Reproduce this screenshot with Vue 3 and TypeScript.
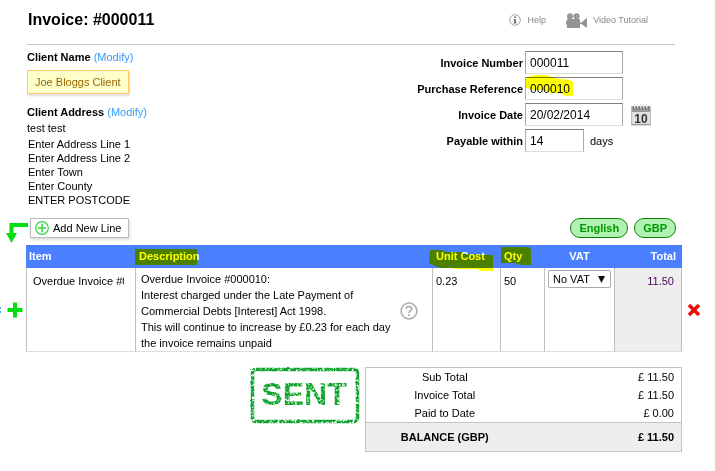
<script setup lang="ts">
import { computed, reactive, ref } from 'vue'

interface Line {
  item: string
  description: string
  unitCost: string
  qty: string
  vat: string
}

const invoiceNumber = ref('000011')
const purchaseReference = ref('000010')
const invoiceDate = ref('20/02/2014')
const payableWithin = ref('14')

const address = [
  'Enter Address Line 1',
  'Enter Address Line 2',
  'Enter Town',
  'Enter County',
  'ENTER POSTCODE',
]

const line = reactive<Line>({
  item: 'Overdue Invoice #000010',
  description: [
    'Overdue Invoice #000010:',
    'Interest charged under the Late Payment of',
    'Commercial Debts [Interest] Act 1998.',
    'This will continue to increase by £0.23 for each day',
    'the invoice remains unpaid',
  ].join('\n'),
  unitCost: '0.23',
  qty: '50',
  vat: 'No VAT',
})

const lineTotal = computed(() => (Number(line.unitCost) * Number(line.qty)).toFixed(2))
</script>

<template>
  <main class="page">
    <header class="header">
      <h1>Invoice: #{{ invoiceNumber }}</h1>
      <nav class="links">
        <a href="#help" class="help">
          <svg width="12" height="12" viewBox="0 0 12 12" aria-hidden="true">
            <circle cx="6" cy="6" r="5.3" fill="#fff" stroke="#a0a0a0" />
            <path d="M5 2.5h2v1.6H5zM4.6 5H7v3.6h.6v.9H4.4v-.9H5V5.9h-.4z" fill="#777" />
          </svg>
          Help
        </a>
        <a href="#video" class="video">
          <svg width="21" height="15" viewBox="0 0 21 15" aria-hidden="true">
            <g fill="#949494">
              <circle cx="4" cy="3.200" r="3" />
              <circle cx="10.500" cy="3.200" r="3" />
              <path d="M1 6h13v3.500h1.500L20 5.500h1v9h-1L15.500 11H14v4H1v-3.500H0V8h1z" />
            </g>
            <circle cx="4" cy="3" r=".6" fill="#ccc" />
            <circle cx="10.500" cy="3" r=".6" fill="#ccc" />
          </svg>
          Video Tutorial
        </a>
      </nav>
    </header>

    <section class="details">
      <div class="client">
        <p class="caption"><b>Client Name</b> <a href="#client">(Modify)</a></p>
        <div class="client-name">Joe Bloggs Client</div>
        <p class="caption"><b>Client Address</b> <a href="#address">(Modify)</a></p>
        <p class="contact">test test</p>
        <address>
          <div v-for="row in address" :key="row">{{ row }}</div>
        </address>
      </div>

      <form class="fields" @submit.prevent>
        <label for="number">Invoice Number</label>
        <input id="number" v-model="invoiceNumber" type="text" />
        <span></span>
        <label for="reference">Purchase Reference</label>
        <div class="marked">
          <input id="reference" v-model="purchaseReference" type="text" />
          <svg class="marker marker-ref" width="49" height="22" viewBox="0 0 49 22" aria-hidden="true">
            <path d="M1 4Q2 1 10 0H20Q29 2 34 4Q46 4 48 7V21H42L34 18H26L17 15H9L1 13Z" fill="#ff0" />
          </svg>
        </div>
        <span></span>
        <label for="date">Invoice Date</label>
        <input id="date" v-model="invoiceDate" type="text" />
        <button type="button" class="calendar" aria-label="Choose date">
          <svg width="20" height="22" viewBox="0 0 20 22" aria-hidden="true">
            <rect x=".5" y="2.500" width="19" height="18.500" fill="#e0e0e0" stroke="#bbb" />
            <rect x="1" y="3" width="18" height="5" fill="#999" />
            <path d="M2.500 2v4M5.500 2v4M8.500 2v4M11.500 2v4M14.500 2v4M17.500 2v4" stroke="#777" />
            <path d="M3.500 0v4M6.500 0v4M9.500 0v4M12.500 0v4M15.500 0v4" stroke="#ddd" />
            <path d="M1 20.500h18" stroke="#999" />
            <text x="10" y="19" text-anchor="middle" font-size="12" font-weight="700" fill="#333">10</text>
          </svg>
        </button>
        <label for="payable">Payable within</label>
        <div class="payable">
          <input id="payable" v-model="payableWithin" type="text" />
          <span>days</span>
        </div>
      </form>
    </section>

    <section class="toolbar">
      <svg class="down-arrow" width="22" height="22" viewBox="0 0 22 22" aria-hidden="true">
        <path d="M3.500 2H22v4H7.500v6H11L5.500 22L0 12h3.500z" fill="#00e010" />
      </svg>
      <button type="button" class="add-line">
        <svg width="14" height="14" viewBox="0 0 14 14" aria-hidden="true">
          <circle cx="7" cy="7" r="6.300" fill="none" stroke="#2fd83b" stroke-width="1.200" />
          <path d="M7 3v8M3 7h8" stroke="#2fd83b" stroke-width="1.500" />
        </svg>
        Add New Line
      </button>
      <div class="pills">
        <button type="button">English</button>
        <button type="button">GBP</button>
      </div>
    </section>

    <section class="lines">
      <div class="gutter-left">
        <svg width="2" height="6" viewBox="0 0 2 6" aria-hidden="true">
          <path d="M0 0h1v2H0zM0 4h1v2H0z" fill="#3aa5ff" />
        </svg>
        <button type="button" aria-label="Insert line">
          <svg width="16" height="16" viewBox="0 0 16 16" aria-hidden="true">
            <path d="M6 0.500h4V6h5.500v4H10v5.500H6V10H.5V6H6z" fill="#00df12" />
          </svg>
        </button>
      </div>

      <table class="items">
        <colgroup>
          <col class="c-item" />
          <col />
          <col class="c-cost" />
          <col class="c-qty" />
          <col class="c-vat" />
          <col class="c-total" />
        </colgroup>
        <thead>
          <tr>
            <th>Item</th>
            <th>
              <div class="marked">
                Description
                <svg class="marker marker-desc" width="62" height="16" viewBox="0 0 62 16" aria-hidden="true">
                  <path d="M0 0H62V16H0Z" fill="#ff0" />
                </svg>
              </div>
            </th>
            <th>
              <div class="marked">
                Unit Cost
                <svg class="marker marker-cost" width="65" height="23" viewBox="0 0 65 23" aria-hidden="true">
                  <path d="M1 1H12L18 3H32L35 5L64 6V22H52L48 20H24V19H12L6 17L0 14Z" fill="#ff0" />
                </svg>
              </div>
            </th>
            <th>
              <div class="marked">
                Qty
                <svg class="marker marker-qty" width="31" height="18" viewBox="0 0 31 18" aria-hidden="true">
                  <path d="M0 0H28L30 3V18H20L14 16H0Z" fill="#ff0" />
                </svg>
              </div>
            </th>
            <th class="center">VAT</th>
            <th class="right">Total</th>
          </tr>
        </thead>
        <tbody>
          <tr>
            <td><input v-model="line.item" class="item-input" type="text" aria-label="Item" /></td>
            <td>
              <div class="description">
                <textarea v-model="line.description" rows="5" aria-label="Description"></textarea>
                <button type="button" aria-label="About this line">
                  <svg width="18" height="18" viewBox="0 0 18 18" aria-hidden="true">
                    <circle cx="9" cy="9" r="7.900" fill="none" stroke="#aaa" stroke-width="1.500" />
                    <path d="M6.300 7Q6.300 4.500 9 4.500T11.700 7Q11.700 8 10.300 8.800Q9 9.600 9 11" fill="none" stroke="#aaa" stroke-width="1.600" />
                    <path d="M8.100 12.200h1.800V14H8.100z" fill="#aaa" />
                  </svg>
                </button>
              </div>
            </td>
            <td><input v-model="line.unitCost" type="text" aria-label="Unit cost" /></td>
            <td><input v-model="line.qty" type="text" aria-label="Quantity" /></td>
            <td class="vat-cell">
              <div class="vat">
                <select v-model="line.vat" aria-label="VAT">
                  <option>No VAT</option>
                </select>
                <svg width="7" height="7" viewBox="0 0 7 7" aria-hidden="true">
                  <path d="M0 0H7L3.500 7Z" fill="#111" />
                </svg>
              </div>
            </td>
            <td class="line-total right">{{ lineTotal }}</td>
          </tr>
        </tbody>
      </table>

      <div class="gutter-right">
        <button type="button" aria-label="Delete line">
          <svg width="14" height="14" viewBox="0 0 14 14" aria-hidden="true">
            <path d="M2 2L12 12M12 2L2 12" stroke="#ee0b0b" stroke-width="3.600" />
          </svg>
        </button>
      </div>
    </section>

    <section class="summary">
      <svg class="stamp" width="110" height="58" viewBox="0 0 110 58" role="img" aria-label="Sent">
        <defs>
          <filter id="worn" x="0" y="0" width="110" height="58" filterUnits="userSpaceOnUse">
            <feTurbulence type="fractalNoise" baseFrequency="0.4" numOctaves="2" seed="6" result="grain" />
            <feDisplacementMap in="SourceGraphic" in2="grain" scale="2" result="rough" />
            <feColorMatrix in="grain" type="matrix" values="0 0 0 0 0  0 0 0 0 0  0 0 0 0 0  0 0 0 4 -1.050" result="holes" />
            <feComposite in="rough" in2="holes" operator="in" />
          </filter>
        </defs>
        <g filter="url(#worn)">
          <rect x="2.500" y="2.500" width="105" height="52" rx="3" fill="none" stroke="#0fa32c" stroke-width="3.500" />
          <text x="54" y="38" text-anchor="middle" font-size="32" font-weight="700" fill="#0fa32c">SENT</text>
        </g>
      </svg>
      <table class="totals">
        <tbody>
          <tr><th>Sub Total</th><td>£ {{ lineTotal }}</td></tr>
          <tr><th>Invoice Total</th><td>£ {{ lineTotal }}</td></tr>
          <tr><th>Paid to Date</th><td>£ 0.00</td></tr>
        </tbody>
        <tfoot>
          <tr><th>BALANCE (GBP)</th><td>£ {{ lineTotal }}</td></tr>
        </tfoot>
      </table>
    </section>
  </main>
</template>

<style>
body {
  background: #fff;
}
</style>

<style scoped>
.page {
  font: 11px/14px "Liberation Sans", Arial, sans-serif;
  color: #000;
}
.page * {
  box-sizing: border-box;
}
h1,
p {
  margin: 0;
}
a {
  color: #3399ff;
  text-decoration: none;
}
svg {
  display: block;
  flex: none;
}
button,
input,
select,
textarea {
  font: inherit;
  color: inherit;
  margin: 0;
  padding: 0;
  border: 0;
  background: none;
  border-radius: 0;
}
.header {
  display: flex;
  justify-content: space-between;
  align-items: center;
  height: 45px;
  margin: 0 40px 0 27px;
  padding: 0 27px 4px 1px;
  border-bottom: 1px solid #c8c8c8;
}
h1 {
  font-size: 16px;
  line-height: 20px;
}
.links {
  display: flex;
  gap: 20px;
  font-size: 9px;
}
.links a {
  display: flex;
  align-items: center;
  color: #888;
}
.help {
  gap: 7px;
}
.video {
  gap: 6px;
}
.details {
  display: flex;
  justify-content: space-between;
  padding: 6px 64px 0 27px;
}
.caption {
  line-height: 13px;
}
.client-name {
  display: inline-block;
  margin: 6px 0 12px;
  padding: 4px 7px;
  border: 1px solid #ffc966;
  background: #ffffcc;
  color: #996600;
  line-height: 14px;
  box-shadow: 1px 2px 2px #ddd;
}
.contact {
  margin-top: 2px;
}
address {
  margin-top: 2px;
  padding-left: 1px;
  font-style: normal;
}
.fields {
  display: grid;
  grid-template-columns: auto 98px 28px;
  grid-auto-rows: 23px;
  gap: 3px 0;
  align-items: center;
}
.fields label {
  padding-right: 2px;
  font-weight: 700;
  text-align: right;
}
.fields input {
  display: block;
  width: 98px;
  height: 23px;
  padding: 0 4px;
  border: 1px solid;
  border-color: #7f7f7f #aaa #ddd;
  font-size: 12px;
  background: #fff;
}
.calendar {
  justify-self: end;
}
.fields .payable {
  display: flex;
  align-items: center;
  gap: 6px;
  grid-column: 2 / 4;
}
.payable input {
  width: 59px;
}
.marked {
  position: relative;
}
.marker {
  position: absolute;
  mix-blend-mode: multiply;
  pointer-events: none;
}
.marker-ref {
  left: 0;
  top: -2px;
}
.marker-desc {
  left: -4px;
  top: 0;
}
.marker-cost {
  left: -7px;
  top: 0;
}
.marker-qty {
  left: -3px;
  top: -2px;
}
.toolbar {
  display: flex;
  align-items: center;
  margin-top: 10px;
  padding: 0 39px 0 6px;
  height: 22px;
}
.down-arrow {
  margin-top: 8px;
}
.add-line {
  display: flex;
  align-items: center;
  gap: 4px;
  height: 20px;
  margin-left: 2px;
  padding: 0 6px 0 4px;
  border: 1px solid #bbb;
  background: #fff;
  box-shadow: 1px 2px 3px #ddd;
}
.pills {
  display: flex;
  gap: 6px;
  margin-left: auto;
}
.pills button {
  height: 20px;
  padding: 0 8px;
  border: 1px solid #0b7f0b;
  border-radius: 10px;
  background: #b1f2b3;
  color: #009a00;
  font-weight: 700;
}
.lines {
  display: grid;
  grid-template-columns: 26px 1fr 33px;
  margin-top: 6px;
}
.gutter-left,
.gutter-right {
  display: flex;
  align-items: center;
  padding-top: 23px;
}
.gutter-left {
  justify-content: space-between;
  padding-right: 3px;
}
.gutter-right {
  padding-left: 5px;
}
.items {
  width: 100%;
  table-layout: fixed;
  border-collapse: separate;
  border-spacing: 0;
}
.c-item {
  width: 109px;
}
.c-cost {
  width: 68px;
}
.c-qty {
  width: 44px;
}
.c-vat {
  width: 70px;
}
.c-total {
  width: 68px;
}
.items th {
  height: 23px;
  padding: 0 3px 2px 4px;
  background: #4a7fff;
  color: #fff;
  text-align: left;
}
.items th:first-child {
  padding-left: 3px;
}
.items .center {
  text-align: center;
}
.items .right {
  text-align: right;
}
.items th.right {
  padding-right: 6px;
}
.items td {
  height: 84px;
  padding: 6px 3px 0;
  border-left: 1px solid #c0c0c0;
  border-bottom: 1px solid #ddd;
  vertical-align: top;
}
.items td input {
  display: block;
  width: 100%;
  height: 14px;
}
.items .item-input {
  width: 94px;
  padding: 0 0 0 3px;
}
.items td:nth-child(2) {
  padding: 3px 14px 0 5px;
}
.description {
  display: flex;
  align-items: center;
  justify-content: space-between;
}
.description textarea {
  width: 255px;
  height: 80px;
  line-height: 16px;
  resize: none;
  overflow: hidden;
}
.items td.vat-cell {
  padding-top: 2px;
}
.vat {
  display: grid;
  align-items: center;
  width: 63px;
}
.vat select,
.vat svg {
  grid-area: 1 / 1;
}
.vat select {
  appearance: none;
  height: 18px;
  padding-left: 4px;
  border: 1px solid #aaa;
  border-radius: 2px;
  background: #fff;
}
.vat svg {
  justify-self: end;
  margin-right: 6px;
  pointer-events: none;
}
.items td.line-total {
  padding-right: 7px;
  border-right: 1px solid #c0c0c0;
  background: #eee;
  color: #4b005a;
}
.summary {
  display: flex;
  justify-content: flex-end;
  align-items: flex-start;
  gap: 5px;
  padding: 15px 33px 0 0;
}
.totals {
  width: 317px;
  border: 1px solid #c4c4c4;
  border-spacing: 0;
}
.totals th,
.totals td {
  width: 50%;
  height: 18px;
  padding: 0 7px 0 0;
  font-weight: 400;
  text-align: right;
}
.totals th {
  padding: 0;
  text-align: center;
}
.totals tfoot th,
.totals tfoot td {
  height: 29px;
  border-top: 1px solid #c4c4c4;
  background: #eee;
  font-weight: 700;
}
</style>
